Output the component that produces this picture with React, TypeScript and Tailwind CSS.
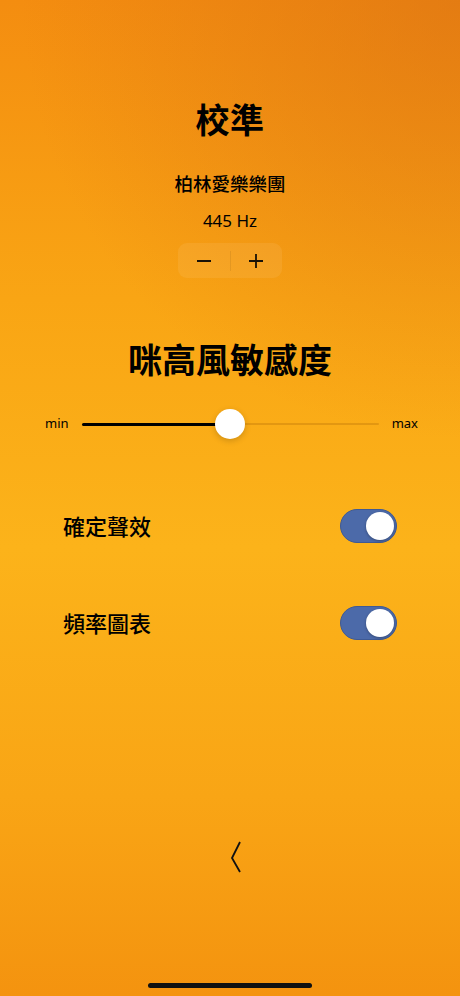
import { useState } from 'react';

const font = { fontFamily: '"Noto Sans", "Noto Sans CJK TC", sans-serif' };

function Toggle({ on, onChange }: { on: boolean; onChange: () => void }) {
  return (
    <button
      type="button"
      onClick={onChange}
      className={`relative w-[57px] h-[34px] rounded-full border border-[#3f5a94] transition-colors ${
        on ? 'bg-[#4c6aa9]' : 'bg-black/10'
      }`}
    >
      <span
        className={`absolute top-[2px] w-[28px] h-[28px] rounded-full bg-white shadow-[0_1px_3px_rgba(0,0,0,0.3)] transition-all ${
          on ? 'left-[25px]' : 'left-[2px]'
        }`}
      />
    </button>
  );
}

export default function App() {
  const [hz, setHz] = useState(445);
  const [sound, setSound] = useState(true);
  const [chart, setChart] = useState(true);
  const pct = 50;

  return (
    <div
      className="relative w-[460px] h-[996px] overflow-hidden text-black bg-[linear-gradient(180deg,#f48d10_0%,#f9a514_30%,#fcb31a_55%,#f9a515_80%,#f4930f_100%)]"
      style={font}
    >
      <div className="absolute inset-0 pointer-events-none bg-[radial-gradient(circle_at_100%_0%,rgba(215,110,20,0.55),transparent_40%)]" />
      <div className="relative flex flex-col items-center">
        <h1 className="mt-[98px] text-[34px] leading-[44px] font-bold tracking-[0.5px]">校準</h1>
        <div className="mt-[30px] text-[18.5px] leading-[24px] font-medium">柏林愛樂樂團</div>
        <div className="mt-[13px] text-[17px] leading-[24px]">{hz} Hz</div>
        <div className="mt-[10px] flex items-center w-[104px] h-[35px] rounded-[9px] bg-white/[0.07]">
          <button type="button" onClick={() => setHz(hz - 1)} className="flex-1 h-full flex items-center justify-center">
            <svg width="16" height="16" viewBox="0 0 16 16">
              <path d="M1 8h14" stroke="#1a1206" strokeWidth="2" />
            </svg>
          </button>
          <div className="w-px h-[20px] bg-black/[0.07]" />
          <button type="button" onClick={() => setHz(hz + 1)} className="flex-1 h-full flex items-center justify-center">
            <svg width="16" height="16" viewBox="0 0 16 16">
              <path d="M1 8h14M8 1v14" stroke="#1a1206" strokeWidth="1.8" />
            </svg>
          </button>
        </div>

        <h2 className="mt-[60px] text-[34px] leading-[44px] font-bold">咪高風敏感度</h2>

        <div className="mt-[27px] w-full flex items-center pl-[45px] pr-[42px] gap-[13px] text-[13px]">
          <span>min</span>
          <div className="relative flex-1 h-[30px] flex items-center">
            <div className="w-full h-[2px] bg-[#d98f10]/70 rounded-full" />
            <div className="absolute left-0 h-[3px] bg-black rounded-full" style={{ width: `${pct}%` }} />
            <div
              className="absolute w-[30px] h-[30px] rounded-full bg-white shadow-[0_2px_6px_rgba(0,0,0,0.18)] -translate-x-1/2"
              style={{ left: `${pct}%` }}
            />
          </div>
          <span>max</span>
        </div>

        <div className="mt-[70px] w-full flex flex-col gap-[63px] pl-[63px] pr-[63px]">
          <div className="flex items-center justify-between">
            <span className="text-[22px] leading-[30px] font-medium">確定聲效</span>
            <Toggle on={sound} onChange={() => setSound(!sound)} />
          </div>
          <div className="flex items-center justify-between">
            <span className="text-[22px] leading-[30px] font-medium">頻率圖表</span>
            <Toggle on={chart} onChange={() => setChart(!chart)} />
          </div>
        </div>

        <button type="button" className="mt-[200px] ml-[12px]">
          <svg width="12" height="34" viewBox="0 0 12 34">
            <path d="M10 2L2 18l8 14" fill="none" stroke="#111" strokeWidth="1.8" />
          </svg>
        </button>
      </div>
      <div className="absolute bottom-[8px] left-[148px] w-[164px] h-[5px] rounded-full bg-[#111]" />
    </div>
  );
}
